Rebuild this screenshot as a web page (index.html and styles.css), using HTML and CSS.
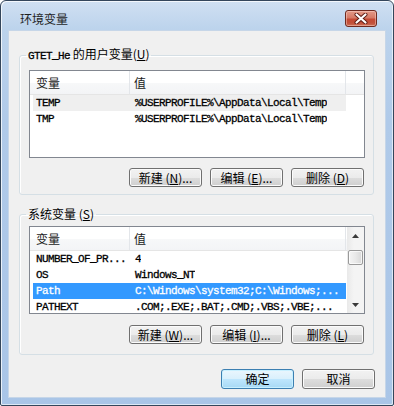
FILE: index.html
```html
<!DOCTYPE html>
<html lang="zh-CN">
<head>
<meta charset="utf-8">
<title>环境变量</title>
<link rel="stylesheet" href="styles.css">
</head>
<body>
<div class="window">
  <div class="titlebar">
    <span class="title">环境变量</span>
    <button class="close" aria-label="关闭">
      <svg width="14" height="11" viewBox="0 0 14 11">
        <path d="M2.5 1.5 L11.5 9.5 M11.5 1.5 L2.5 9.5" stroke="#5a1a12" stroke-width="4" stroke-linecap="round"/>
        <path d="M2.5 1.5 L11.5 9.5 M11.5 1.5 L2.5 9.5" stroke="#ffffff" stroke-width="2.2" stroke-linecap="round"/>
      </svg>
    </button>
  </div>
  <div class="client">
    <fieldset class="group group-user">
      <legend><span class="mono">GTET_He</span> 的用户变量(<u>U</u>)</legend>
      <div class="list">
        <div class="list-main">
          <div class="list-head">
            <div class="hcol hc1">变量</div>
            <div class="hcol hc2">值</div>
            <div class="hcol hrest"></div>
          </div>
          <div class="row row-inactive"><span class="c1 mono">TEMP</span><span class="c2 mono">%USERPROFILE%\AppData\Local\Temp</span></div>
          <div class="row"><span class="c1 mono">TMP</span><span class="c2 mono">%USERPROFILE%\AppData\Local\Temp</span></div>
        </div>
      </div>
      <div class="btns">
        <button class="btn">新建 (<u>N</u>)...</button>
        <button class="btn">编辑 (<u>E</u>)...</button>
        <button class="btn">删除 (<u>D</u>)</button>
      </div>
    </fieldset>

    <fieldset class="group group-sys">
      <legend>系统变量 (<u>S</u>)</legend>
      <div class="list">
        <div class="list-main">
          <div class="list-head">
            <div class="hcol hc1">变量</div>
            <div class="hcol hc2">值</div>
            <div class="hcol hrest"></div>
          </div>
          <div class="row"><span class="c1 mono">NUMBER_OF_PR...</span><span class="c2 mono">4</span></div>
          <div class="row"><span class="c1 mono">OS</span><span class="c2 mono">Windows_NT</span></div>
          <div class="row row-selected"><span class="c1 mono">Path</span><span class="c2 mono">C:\Windows\system32;C:\Windows;...</span></div>
          <div class="row"><span class="c1 mono">PATHEXT</span><span class="c2 mono">.COM;.EXE;.BAT;.CMD;.VBS;.VBE;...</span></div>
        </div>
        <div class="scrollbar">
          <div class="sb-arrow">
            <svg width="7" height="4" viewBox="0 0 7 4"><path d="M0 4 L3.5 0 L7 4 Z" fill="#3a3a3a"/></svg>
          </div>
          <div class="sb-track"><div class="sb-thumb"></div></div>
          <div class="sb-arrow">
            <svg width="7" height="4" viewBox="0 0 7 4"><path d="M0 0 L7 0 L3.5 4 Z" fill="#3a3a3a"/></svg>
          </div>
        </div>
      </div>
      <div class="btns">
        <button class="btn">新建 (<u>W</u>)...</button>
        <button class="btn">编辑 (<u>I</u>)...</button>
        <button class="btn">删除 (<u>L</u>)</button>
      </div>
    </fieldset>

    <div class="dlg-btns">
      <button class="btn btn-default">确定</button>
      <button class="btn">取消</button>
    </div>
  </div>
</div>
</body>
</html>
```

FILE: styles.css
```css
html, body {
  margin: 0;
  padding: 0;
  background: #ffffff;
}

body {
  font-family: "Noto Sans CJK SC", "Noto Sans", sans-serif;
  font-size: 12px;
  color: #000;
}

.mono {
  font-family: "Liberation Mono", "Noto Sans CJK SC", monospace;
  font-size: 11px;
  letter-spacing: -0.6px;
  -webkit-text-stroke: 0.3px currentColor;
}

u {
  text-decoration: underline;
  text-underline-offset: 1px;
}

.window {
  box-sizing: border-box;
  width: 394px;
  height: 406px;
  border: 1px solid #34465b;
  border-radius: 6px 6px 2px 2px;
  padding: 0 7px 7px 7px;
  display: flex;
  flex-direction: column;
  background: linear-gradient(to bottom, #d0e0f2 0px, #bcd3ec 28px, #b0cae9 120px, #a9c5e7 100%);
  box-shadow: inset 1px 1px 0 rgba(255,255,255,0.75), inset -1px -1px 0 rgba(255,255,255,0.6);
}

.titlebar {
  height: 29px;
  box-sizing: border-box;
  padding: 9px 9px 0 12px;
  display: flex;
  align-items: flex-start;
  flex: none;
}

.title {
  line-height: 17px;
  color: #1e1e1e;
  font-size: 12px;
}

.close {
  margin-left: auto;
  width: 32px;
  height: 17px;
  padding: 0;
  border: 1px solid #6e2a1f;
  border-radius: 3px;
  background: linear-gradient(to bottom, #e39a88 0%, #d67a66 45%, #c44a34 55%, #c1503a 80%, #cd7259 100%);
  box-shadow: inset 0 0 0 1px rgba(255,220,210,0.45);
  display: flex;
  align-items: center;
  justify-content: center;
}

.close svg {
  display: block;
}

.client {
  flex: 1;
  box-sizing: border-box;
  background: #f0f0f0;
  border: 1px solid #c6d6e8;
  display: flex;
  flex-direction: column;
}

.group {
  margin: 0 11px 0 10px;
  padding: 0 8px 0 9px;
  border: 1px solid #d5dfe5;
  border-radius: 3px;
  box-shadow: inset 1px 1px 0 #ffffff;
  min-width: 0;
}

.group legend {
  padding: 0 2px;
  margin-left: -3px;
  line-height: 16px;
  font-size: 12px;
  color: #000;
}

.group-user {
  margin-top: 15px;
  padding-bottom: 7px;
}

.group-sys {
  margin-top: 11px;
  padding-bottom: 10px;
}

.list {
  box-sizing: border-box;
  height: 88px;
  border: 1px solid #828790;
  background: #ffffff;
  display: flex;
  overflow: hidden;
}

.group-user .list {
  margin-top: 6px;
}

.group-sys .list {
  margin-top: 4px;
}

.list-main {
  flex: 1;
  min-width: 0;
  overflow: hidden;
}

.list-head {
  display: flex;
  height: 24px;
  box-sizing: border-box;
  border-bottom: 1px solid #e5e5e5;
  background: linear-gradient(to bottom, #ffffff 0%, #ffffff 50%, #f7f8f9 51%, #f3f4f6 100%);
}

.hcol {
  box-sizing: border-box;
  line-height: 23px;
  color: #1a1a1a;
  font-size: 12px;
}

.hc1 {
  width: 100px;
  padding-left: 6px;
  border-right: 1px solid #e3e6ea;
}

.hc2 {
  width: 216px;
  padding-left: 4px;
  border-right: 1px solid #e3e6ea;
}

.hrest {
  flex: 1;
}

.row {
  display: flex;
  width: 313px;
  height: 16px;
  margin-left: 3px;
  line-height: 16px;
  white-space: nowrap;
  color: #000;
}

.row-inactive {
  background: #efefef;
}

.row-selected {
  background: #3399ff;
  color: #ffffff;
}

.c1 {
  box-sizing: border-box;
  width: 97px;
  padding-left: 3px;
  overflow: hidden;
  flex: none;
}

.c2 {
  padding-left: 5px;
  overflow: hidden;
}

.scrollbar {
  width: 17px;
  flex: none;
  display: flex;
  flex-direction: column;
  background: linear-gradient(to right, #e9e9e9 0%, #f4f4f4 40%, #f4f4f4 100%);
}

.sb-arrow {
  height: 17px;
  flex: none;
  display: flex;
  align-items: center;
  justify-content: center;
}

.sb-arrow svg {
  display: block;
}

.sb-track {
  flex: 1;
  padding-top: 6px;
  box-sizing: border-box;
}

.sb-thumb {
  box-sizing: border-box;
  height: 15px;
  margin: 0 1px;
  border: 1px solid #9a9a9a;
  border-radius: 2px;
  background: linear-gradient(to right, #f4f4f4 0%, #e9e9e9 50%, #d8d8d8 100%);
  box-shadow: inset 0 0 0 1px rgba(255,255,255,0.7);
}

.btns {
  display: flex;
  justify-content: flex-end;
  gap: 8px;
  margin-top: 10px;
  padding-right: 1px;
}

.group-sys .btns {
  margin-top: 11px;
}

.btn {
  box-sizing: border-box;
  width: 73px;
  height: 19px;
  padding: 0;
  font-family: "Noto Sans CJK SC", "Noto Sans", sans-serif;
  font-size: 12px;
  line-height: 17px;
  color: #000;
  border: 1px solid #707070;
  border-radius: 3px;
  background: linear-gradient(to bottom, #f2f2f2 0%, #ebebeb 50%, #dddddd 51%, #cfcfcf 100%);
  box-shadow: inset 0 0 0 1px #fbfbfb;
  white-space: nowrap;
}

.dlg-btns {
  display: flex;
  justify-content: flex-end;
  gap: 8px;
  margin-top: 14px;
  margin-right: 10px;
}

.dlg-btns .btn {
  height: 20px;
  line-height: 18px;
}

.btn-default {
  border-color: #3c7fb1;
  background: linear-gradient(to bottom, #eaf6fd 0%, #d9f0fc 50%, #bee6fd 51%, #a7d9f5 100%);
  box-shadow: inset 0 0 0 1px #c8f0ff;
}
```
